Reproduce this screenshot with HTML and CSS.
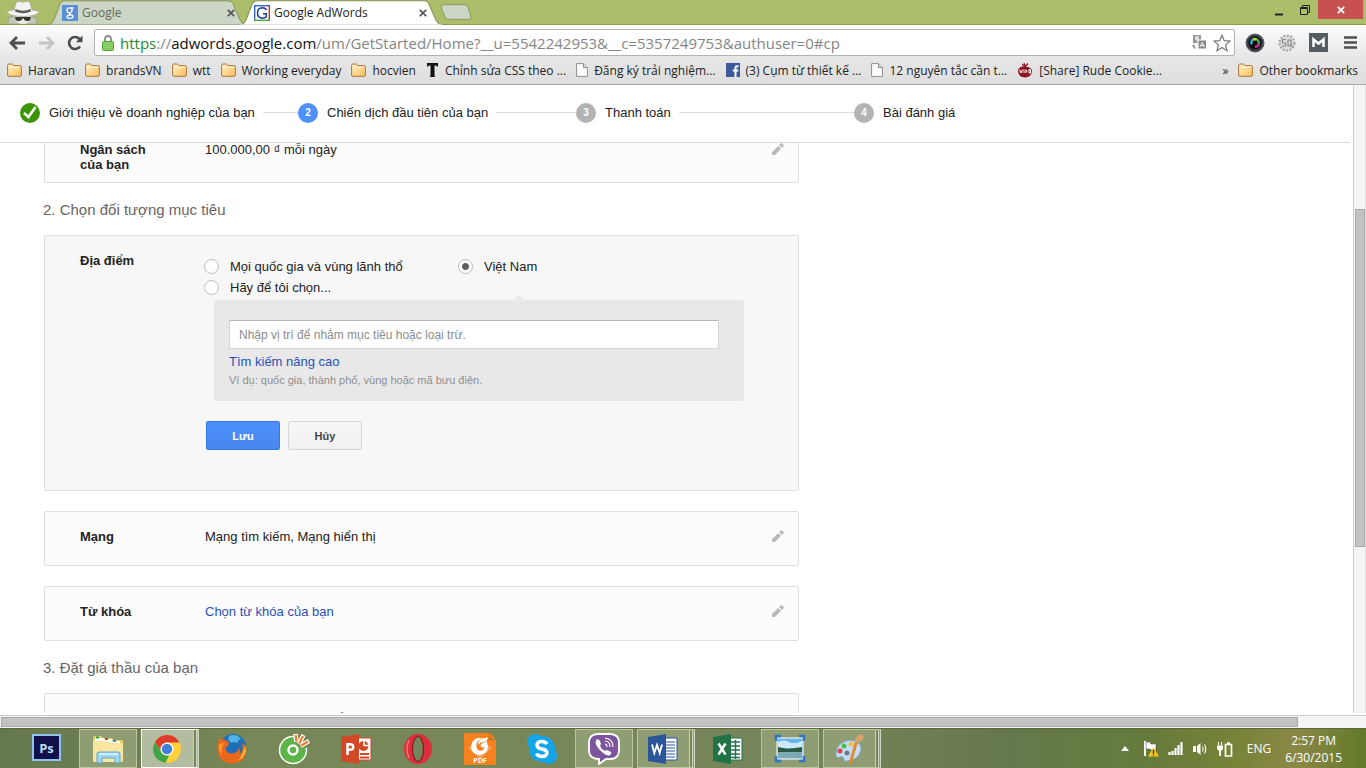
FILE: index.html
```html
<!DOCTYPE html>
<html lang="vi">
<head>
<meta charset="utf-8">
<title>Google AdWords</title>
<link rel="stylesheet" href="styles.css">
</head>
<body>
<svg class="defs" aria-hidden="true">
  <linearGradient id="gold" x1="0" y1="0" x2="1" y2="1"><stop offset="0" stop-color="#fff0c4"/><stop offset="1" stop-color="#fbbd5c"/></linearGradient>
  <symbol id="folder" viewBox="0 0 15 14"><path d="M.6 12V2.5Q.6 1 2 1H5.5L7 2.6H12.8Q14.4 2.6 14.4 4V12Q14.4 13.3 13 13.3H2Q.6 13.3.6 12Z" fill="url(#gold)" stroke="#a8763a"/><path d="M1.5 4.2H13.5" stroke="#fff6dc"/></symbol>
  <symbol id="page" viewBox="0 0 12 14"><path d="M.6.6H7.5L11.4 4.5V13.4H.6Z" fill="#fdfdfd" stroke="#8e8e8e"/><path d="M7.5.6V4.5H11.4" fill="#ddd" stroke="#8e8e8e"/></symbol>
  <symbol id="cross" viewBox="0 0 8 8"><path d="M.8.8 7.2 7.2M7.2.8.8 7.2" stroke="currentColor" stroke-width="1.7"/></symbol>
  <symbol id="pencil" viewBox="0 0 12 12"><path d="M0 9.2V12H2.8L9 5.8 6.2 3ZM7.1 2.1 9.9 4.9 11.6 3.2Q12.2 2.6 11.6 2L10 .4Q9.4-.2 8.8.4Z" fill="#b8b8b8"/></symbol>
</svg>

<header class="tabstrip">
  <svg class="incognito" viewBox="0 0 36 24" aria-hidden="true"><path d="M3 24 5 21 4 18 12 16H26L33 18 32 21 34 24Z" fill="#c4c8ba" stroke="#949a84" stroke-width=".7"/><path d="M11 14V18Q12 24 19 24T27 18V14Z" fill="#e9eae4"/><path d="M3 12.500Q3 10.500 10 10L12 3Q13 .5 16 1.500 19 3 22 1.500 25 .5 26 3L28 10Q35 10.500 35 12.500 31 16.500 19 16.500T3 12.500Z" fill="#f2f3ee" stroke="#a4a996" stroke-width=".8"/><path d="M11.500 9Q19 12.500 26.500 9L27 11.500Q19 15 11 11.500Z" fill="#5b5e56"/><path d="M11 17H27L26.500 19.500Q25.500 21.500 22.500 21 20.500 20.500 19.500 18.500H18.500Q17.500 20.500 15.500 21 12.500 21.500 11.500 19.500Z" fill="#35372f"/></svg>
  <nav class="tabs" aria-label="Tabs">
    <a class="tab tab-idle" href="#google">
      <svg class="tab-shape" viewBox="0 0 200 25" preserveAspectRatio="none" aria-hidden="true"><path d="M0 25Q4 24 6 20L12 4Q13 .8 17 .8H182Q186 .8 187 4L194 20Q196 24 200 25Z" fill="#cbd6c7" stroke="#84935a"/></svg>
      <svg class="fav" viewBox="0 0 16 16" aria-hidden="true"><rect width="16" height="16" fill="#5a8fd8"/><path d="M9.500 3.200Q4.800 2 5 5.500 5.200 8 8.500 7.600 11 6.500 9.500 3.200M8.500 7.600Q6 9 9 9.700 12 11 10.500 12.700 8 14 5.500 12.800 3.800 10.500 8.500 9.800M9 3H11.500" fill="none" stroke="#fff" stroke-width="1.400"/></svg>
      <span>Google</span>
      <svg class="close" aria-hidden="true"><use href="#cross"/></svg>
    </a>
    <a class="tab tab-live" href="#adwords">
      <svg class="tab-shape" viewBox="0 0 200 25" preserveAspectRatio="none" aria-hidden="true"><path d="M0 25Q4 24 6 20L12 4Q13 .8 17 .8H182Q186 .8 187 4L194 20Q196 24 200 25Z" fill="#fff" stroke="#84935a"/><path d="M0 25H200" stroke="#fff"/></svg>
      <svg class="fav" viewBox="0 0 16 16" aria-hidden="true"><rect width="16" height="16" fill="#fff"/><path d="M0 .7H16" stroke="#36c" stroke-width="1.400"/><path d="M.7 0V16" stroke="#36c" stroke-width="1.400"/><path d="M15.300 0V16" stroke="#c33" stroke-width="1.400"/><path d="M0 15.300H16" stroke="#4a4" stroke-width="1.400"/><path d="M12.500 5Q11.500 2.800 8.500 2.800 3.500 3 3.500 8T8.500 13.200Q11 13.200 12.300 11.800V8.700H9" fill="none" stroke="#1c3f96" stroke-width="1.500"/></svg>
      <span>Google AdWords</span>
      <svg class="close" aria-hidden="true"><use href="#cross"/></svg>
    </a>
  </nav>
  <button class="newtab" aria-label="New tab"><svg viewBox="0 0 32 16" aria-hidden="true"><path d="M4 .7H24Q27 .7 28 3L31 13Q31.500 15.300 29 15.300H9Q6 15.300 5 13L1 3Q.5.7 4 .7Z" fill="#cbd6c7" stroke="#8c9a64"/></svg></button>
  <div class="winctl">
    <button aria-label="Minimize"><svg viewBox="0 0 10 12" width="10" height="12"><path d="M1 10.500H9" stroke="#222" stroke-width="2"/></svg></button>
    <button aria-label="Restore"><svg viewBox="0 0 10 12" width="10" height="12"><path d="M.5 3.500H7.500V10.500H.5ZM.5 4.500H7.500M2.500 3V1.500H9.500V8.500H8" fill="none" stroke="#222"/></svg></button>
    <button class="winclose" aria-label="Close"><svg width="8" height="8"><use href="#cross"/></svg></button>
  </div>
</header>

<div class="toolbar">
  <button aria-label="Back"><svg width="17" height="14" viewBox="0 0 17 14"><path d="M8 1 2 7 8 13M2 7H16" fill="none" stroke="#4e4e4e" stroke-width="2.800"/></svg></button>
  <button aria-label="Forward"><svg width="17" height="14" viewBox="0 0 17 14"><path d="M9 1 15 7 9 13M15 7H1" fill="none" stroke="#c4c4c4" stroke-width="2.800"/></svg></button>
  <button aria-label="Reload"><svg width="17" height="16" viewBox="0 0 17 16"><path d="M13 11.500A6 6 0 1 1 12.500 4" fill="none" stroke="#4e4e4e" stroke-width="2.600"/><path d="M15.500.5V7.200H8.800Z" fill="#4e4e4e"/></svg></button>
  <div class="omnibox">
    <svg width="12" height="16" viewBox="0 0 12 16" aria-hidden="true"><path d="M3 8V4Q3 1 6 1T9 4V8" fill="none" stroke="#8b8b8b" stroke-width="1.800"/><rect x=".5" y="6.500" width="11" height="9" rx="1" fill="#8fd468" stroke="#4f9c35"/><path d="M1.500 9H10.500M1.500 11.500H10.500M1.500 13.500H10.500" stroke="#7cc456"/></svg>
    <div class="url" role="textbox" contenteditable="true" spellcheck="false" aria-label="Address"><span class="secure">https</span>://<span class="host">adwords.google.com</span>/um/GetStarted/Home?__u=5542242953&amp;__c=5357249753&amp;authuser=0#cp</div>
    <svg width="15" height="15" viewBox="0 0 15 15" aria-hidden="true"><rect x="1" y="0" width="8" height="8" fill="#999"/><path d="M3 2H7M5 2V6M3 4H7" stroke="#fff"/><rect x="6" y="5" width="8.500" height="9" fill="#888" stroke="#fff"/><path d="M8 12 10.300 7.500 12.500 12M9 10.500H12" fill="none" stroke="#fff"/><path d="M0 11H3M2 9.500V13H4" fill="none" stroke="#888"/></svg>
    <button aria-label="Bookmark this page"><svg width="18" height="18" viewBox="0 0 18 18"><path d="M9 1.200 11.200 6.700 17 7.100 12.600 10.900 14 16.700 9 13.500 4 16.700 5.400 10.900 1 7.100 6.800 6.700Z" fill="#fff" stroke="#777" stroke-width="1.200"/></svg></button>
  </div>
  <div class="extensions">
    <button aria-label="Camera"><svg width="20" height="20" viewBox="0 0 20 20"><circle cx="10" cy="10" r="9" fill="#3b4047" stroke="#5b6068"/><circle cx="10" cy="10" r="6.500" fill="#0a0a10"/><path d="M10 10 7 5.500Q10 4 12.500 5.500Z" fill="#b6d433"/><path d="M10 10 12.500 5.500Q15.500 7.500 15 11Z" fill="#2fb84c"/><path d="M10 10 15 11Q14 15 10 15Z" fill="#d72aa0"/><path d="M10 10 5.500 12Q4.500 8 7 5.500Z" fill="#2ab5c8"/><circle cx="10" cy="10" r="2.500" fill="#07070b"/></svg></button>
    <button aria-label="SEO tool"><svg width="18" height="18" viewBox="0 0 18 18"><circle cx="9" cy="9" r="7.500" fill="#ddd" stroke="#a0a0a0" stroke-width="2" stroke-dasharray="2 1.500"/><path d="M7.800 5.500H4.500V9H7.500V12H4M10 6H13V12H10ZM12 10 14.500 13" fill="none" stroke="#888" stroke-width="1.200"/></svg></button>
    <button aria-label="Mail"><svg width="19" height="19" viewBox="0 0 19 19"><rect width="19" height="19" fill="#565d62"/><path d="M4.500 14V6.500L9.500 10.500 14.500 6.500V14" fill="none" stroke="#fff" stroke-width="2.600"/></svg></button>
    <button class="menu" aria-label="Menu"><svg width="13" height="13" viewBox="0 0 13 13"><path d="M0 1.500H13M0 6.500H13M0 11.500H13" stroke="#505050" stroke-width="2.600"/></svg></button>
  </div>
</div>

<nav class="bookmarks" aria-label="Bookmarks">
  <a href="#b1"><svg class="i-folder"><use href="#folder"/></svg>Haravan</a>
  <a href="#b2"><svg class="i-folder"><use href="#folder"/></svg>brandsVN</a>
  <a href="#b3"><svg class="i-folder"><use href="#folder"/></svg>wtt</a>
  <a href="#b4"><svg class="i-folder"><use href="#folder"/></svg>Working everyday</a>
  <a href="#b5"><svg class="i-folder"><use href="#folder"/></svg>hocvien</a>
  <a href="#b6"><svg width="13" height="16" viewBox="0 0 13 16"><path d="M1 1H12V4.500H11L10 3.500H8.500V14L9.500 15H3.500L4.500 14V3.500H3L2 4.500H1Z" fill="#111"/></svg>Chỉnh sửa CSS theo ...</a>
  <a href="#b7"><svg class="i-page"><use href="#page"/></svg>Đăng ký trải nghiệm...</a>
  <a href="#b8"><svg width="14" height="14" viewBox="0 0 14 14"><rect width="14" height="14" fill="#3e5a9b"/><path d="M12.500 3.200H11Q9.500 3.200 9.500 5V14M6.800 7.500H12.300" fill="none" stroke="#fff" stroke-width="2"/></svg>(3) Cụm từ thiết kế ...</a>
  <a href="#b9"><svg class="i-page"><use href="#page"/></svg>12 nguyên tắc cần t...</a>
  <a href="#b10"><svg width="16" height="15" viewBox="0 0 16 15"><path d="M1 8Q1 3 8 3.500T15 8Q14.500 14.500 8 14.500T1 8Z" fill="#8d1620"/><path d="M5 1.500 8 3.500 11 .5M8 3.500 7 .3" fill="none" stroke="#8d1620" stroke-width="1.400"/><path d="M2.500 6.500 4 10 5.500 6.500M7 6.500V10M9 6.500V10M9 8H10.500M12 6.500H13.500V10H12Z" fill="none" stroke="#fff"/></svg>[Share] Rude Cookie...</a>
  <a class="more" href="#more">»</a>
  <a class="other" href="#other"><svg class="i-folder"><use href="#folder"/></svg>Other bookmarks</a>
</nav>

<div class="viewport">
  <main class="page">
    <ol class="steps">
      <li><svg width="20" height="20" viewBox="0 0 20 20" aria-hidden="true"><circle cx="10" cy="10" r="10" fill="#3b9408"/><path d="M4 10 8.500 14 15.500 4" fill="none" stroke="#fff" stroke-width="2.600"/></svg><span>Giới thiệu về doanh nghiệp của bạn</span></li>
      <li><b class="num num-on">2</b><span>Chiến dịch đầu tiên của bạn</span></li>
      <li><b class="num">3</b><span>Thanh toán</span></li>
      <li><b class="num">4</b><span>Bài đánh giá</span></li>
    </ol>
    <div class="content">
      <section class="card card-budget">
        <h3>Ngân sách của bạn</h3>
        <p>100.000,00 ₫ mỗi ngày</p>
        <button class="edit" aria-label="Chỉnh sửa ngân sách"><svg><use href="#pencil"/></svg></button>
      </section>
      <h2>2. Chọn đối tượng mục tiêu</h2>
      <form class="card card-open">
        <h3>Địa điểm</h3>
        <div class="fields">
          <div class="radios">
            <label><input type="radio" name="loc">Mọi quốc gia và vùng lãnh thổ</label>
            <label><input type="radio" name="loc" checked>Việt Nam</label>
            <label><input type="radio" name="loc">Hãy để tôi chọn...</label>
          </div>
          <div class="picker">
            <input type="text" aria-label="Vị trí" placeholder="Nhập vị trí để nhắm mục tiêu hoặc loại trừ.">
            <a href="#advanced">Tìm kiếm nâng cao</a>
            <small>Ví dụ: quốc gia, thành phố, vùng hoặc mã bưu điện.</small>
          </div>
          <div class="actions">
            <button type="button" class="btn btn-primary">Lưu</button>
            <button type="button" class="btn">Hủy</button>
          </div>
        </div>
      </form>
      <section class="card">
        <h3>Mạng</h3>
        <p>Mạng tìm kiếm, Mạng hiển thị</p>
        <button class="edit" aria-label="Chỉnh sửa mạng"><svg><use href="#pencil"/></svg></button>
      </section>
      <section class="card">
        <h3>Từ khóa</h3>
        <p><a href="#keywords">Chọn từ khóa của bạn</a></p>
        <button class="edit" aria-label="Chỉnh sửa từ khóa"><svg><use href="#pencil"/></svg></button>
      </section>
      <h2>3. Đặt giá thầu của bạn</h2>
      <section class="card">
        <h3>Giá thầu</h3>
        <p>Tự động đặt giá thầu để nhận được nhiều nhấp chuột nhất</p>
      </section>
    </div>
  </main>
  <div class="vbar"><i></i></div>
  <div class="hbar"><i></i></div>
</div>

<footer class="taskbar">
  <div class="apps">
    <button aria-label="Photoshop"><svg viewBox="0 0 32 32"><rect x="3" y="2" width="27" height="25" fill="#12104a" stroke="#8fc4ee" stroke-width="2"/><text x="16.500" y="20" text-anchor="middle" class="ps">Ps</text></svg></button>
    <button class="open" aria-label="File Explorer"><svg viewBox="0 0 32 32"><path d="M1 4Q1 3 2 3H9L11 5H20L22 7H31V28H1Z" fill="#e8c867"/><path d="M3 5H12V9H3ZM12 6H20V10H12ZM20 8H28V13H20Z" fill="#fff"/><path d="M4 4.500H7" stroke="#393" stroke-width="2"/><path d="M13 6H16" stroke="#c44" stroke-width="2"/><path d="M21 8H24" stroke="#38c" stroke-width="2"/><path d="M1 8H17L19 10H31V28Q31 29 30 29H2Q1 29 1 28Z" fill="#f9e7a0"/><path d="M5 30V21Q5 19 7 19H26Q28 19 28 21V30H23V25H10V30Z" fill="#9fd6f2" stroke="#5aa8d6"/><path d="M7 21H26" stroke="#dff3fc" stroke-width="1.500"/></svg></button>
    <button class="open open-live stack" aria-label="Chrome"><svg viewBox="0 0 32 32"><circle cx="16" cy="16" r="14" fill="#ffd23c"/><path d="M3.900 9A14 14 0 0 1 28.500 9.500H16A6.500 6.500 0 0 0 10 18Z" fill="#dd3a2d"/><path d="M3.900 9 10.500 19.500Q13 23 18 22.500L14.500 30A14 14 0 0 1 3.900 9Z" fill="#3fa546"/><circle cx="16" cy="16" r="6.500" fill="#fff"/><circle cx="16" cy="16" r="5.200" fill="#3f80d8"/></svg></button>
    <button aria-label="Firefox"><svg viewBox="0 0 32 32"><circle cx="17" cy="14" r="13" fill="#1f6fb8"/><path d="M13 3Q20 0 25 6 21 7 22 10 19 8 15 10L12 6Z" fill="#4fb4e4"/><path d="M3 5Q5 7 8 6.500L13 9 12 13 9 15Q11 21 17 20.500 22 19.500 22 15 25 18 24 21 28 17 26 10 31 13 30.500 18 29 30 16 30.500 3 30 1.800 18 1.500 11 3 5Z" fill="#e8671b"/><path d="M29 12Q32 22 22 28 28 20 29 12Z" fill="#ffc03b"/><path d="M3 11Q2 17 6 22 5 12 9 10Z" fill="#f69a2c"/></svg></button>
    <button aria-label="Cốc Cốc"><svg viewBox="0 0 32 32"><circle cx="15" cy="17" r="13.500" fill="#5bb549" stroke="#fff" stroke-width="1.500"/><path d="M15 17 17 0H32V14Z" fill="#75855a"/><circle cx="15" cy="17" r="7.500" fill="#5bb549"/><circle cx="15" cy="17" r="4.500" fill="#5bb549" stroke="#fff" stroke-width="2.500"/><path d="M17.500 1 18.500 9M25.500 2 21 11M31 8 22.500 13" stroke="#fff" stroke-width="4.500"/><path d="M17.700 2 18.500 8.500M25 3 21.200 10.500M30 8.600 23 12.700" stroke="#ef7d2f" stroke-width="2.300"/></svg></button>
    <button aria-label="PowerPoint"><svg viewBox="0 0 32 32"><path d="M17 5H31V27H17Z" fill="#fff" stroke="#d24726"/><path d="M20 21H29M20 24.500H29" stroke="#d24726" stroke-width="1.800"/><circle cx="23.500" cy="13" r="5" fill="#d24726"/><path d="M24 13V7.500M24 12.500H29" stroke="#fff" stroke-width="1.500"/><path d="M1 4 19 1V31L1 28Z" fill="#d24726"/><path d="M7.500 22V11.200H10Q13.300 11.200 13.300 14T10 16.800H7.500" fill="none" stroke="#fff" stroke-width="2.500"/></svg></button>
    <button aria-label="Opera"><svg viewBox="0 0 32 32"><ellipse cx="16" cy="16" rx="14" ry="15" fill="#dc2f3a"/><ellipse cx="16" cy="16" rx="5.500" ry="12.500" fill="#75855c" stroke="#8c1720" stroke-width="1.200"/><path d="M7 7Q3 16 7 25" fill="none" stroke="#f0747b" stroke-width="1.500"/></svg></button>
    <button aria-label="PDF"><svg viewBox="0 0 32 32"><path d="M0 0H25V7H32V32H0Z" fill="#f5821f"/><path d="M26 0 32 6H26Z" fill="#f5821f"/><path d="M16 6 28 15 16 26 4 15Z" fill="#f8a35a"/><circle cx="15.500" cy="13.500" r="8.500" fill="#fff"/><path d="M23 5Q11 6 12.500 14 13.500 18.500 18 17.500 20.500 16.500 20 13.500 18 15.500 16.500 13 17 9 25 8Z" fill="#f5821f"/><path d="M24 4.500Q13 5.500 14 12 16 8.500 22.500 8.500Z" fill="#fff"/><text x="16" y="30" text-anchor="middle" class="pdf">PDF</text></svg></button>
    <button aria-label="Skype"><svg viewBox="0 0 32 32"><circle cx="16" cy="16" r="13" fill="#12a5e8"/><circle cx="9" cy="9" r="8" fill="#12a5e8"/><circle cx="23" cy="23" r="8" fill="#12a5e8"/><path d="M21 11Q19 8 15 8.500 11 9 11 12 11 15 16 16 21 17 21 20 20.500 23.500 16 23.500 12 23.500 10.500 20.500" fill="none" stroke="#fff" stroke-width="3.500"/></svg></button>
    <button class="open" aria-label="Viber"><svg viewBox="0 0 32 32"><path d="M10 1H22Q31 1 31 10V17Q31 26 22 26H18L11 31V26Q1 26 1 17V10Q1 1 10 1Z" fill="#7d559c" stroke="#fff" stroke-width="1.800"/><path d="M8 7Q10 5 12 8L13 11Q11 13 14 16T19 17L23 19Q24 20 22 22 20 24 14 19 6 12 8 7Z" fill="#fff"/><path d="M17 5Q25 6 25 14M17 8Q22 8 22 14M17 11Q19 11 19 14" fill="none" stroke="#fff" stroke-width="1.200"/></svg></button>
    <button class="open stack" aria-label="Word"><svg viewBox="0 0 32 32"><path d="M17 5H30V27H17Z" fill="#fff" stroke="#2b579a"/><path d="M19 9H28M19 12H28M19 15H28M19 18H28M19 21H28M19 24H28" stroke="#2b579a" stroke-width="1.200"/><path d="M1 4 19 1V31L1 28Z" fill="#2b579a"/><path d="M5 11.500 7.300 20 10 12 12.700 20 15 11.500" fill="none" stroke="#fff" stroke-width="1.900"/></svg></button>
    <button aria-label="Excel"><svg viewBox="0 0 32 32"><path d="M17 5H30V27H17Z" fill="#fff" stroke="#217346"/><path d="M19 9H28M19 13H28M19 17H28M19 21H28M19 24.500H28M23.500 7V26" stroke="#217346" stroke-width="1.400"/><path d="M1 4 19 1V31L1 28Z" fill="#217346"/><path d="M6.500 10.500 13.500 21.500M13.500 10.500 6.500 21.500" fill="none" stroke="#fff" stroke-width="2.400"/></svg></button>
    <button class="open" aria-label="Image viewer"><svg viewBox="0 0 32 32"><rect x="3" y="5" width="26" height="21" fill="#69b4e8" stroke="#fff"/><path d="M4 9Q10 6 15 9T28 8V15H4Z" fill="#cfe9fa"/><path d="M4 14Q9 15 14 16L28 14V19H4Z" fill="#2c5a45"/><path d="M4 19H28V25H4Z" fill="#7fa9b5"/><path d="M2 8V3H7M25 3H30V8M30 23V28H25M7 28H2V23" fill="none" stroke="#3377c4" stroke-width="2.500"/></svg></button>
    <button class="open stack" aria-label="Paint"><svg viewBox="0 0 32 32"><path d="M3 20Q4 9 17 7 29 8 28 17 26 27 14 28 10 29 11 25 9 22 5 25 2 24 3 20Z" fill="#c5def0" stroke="#7ca4c4"/><circle cx="7" cy="18" r="2.500" fill="#d44"/><circle cx="11" cy="13" r="2.500" fill="#5b5"/><circle cx="18" cy="11" r="2.500" fill="#eb5"/><circle cx="14" cy="20" r="2.500" fill="#687b8e"/><path d="M17 31 24 7" stroke="#e08a35" stroke-width="3"/><path d="M22 9Q21 3 29 1L31 4Q30 8 26 9Z" fill="#d7a36c"/></svg></button>
  </div>
  <div class="tray">
    <button aria-label="Show hidden icons"><svg width="8" height="5" viewBox="0 0 8 5"><path d="M0 5 4 0 8 5Z" fill="#fff"/></svg></button>
    <button aria-label="Action Center"><svg width="16" height="17" viewBox="0 0 16 17"><path d="M2 1V16" stroke="#fff" stroke-width="2"/><path d="M3 2H7L8 4H13V10H8L7 9H3Z" fill="#fff" stroke="#444" stroke-width=".5"/><path d="M10.500 7 16 16.500H5Z" fill="#f5c518"/><path d="M10.500 10V13.500M10.500 14.500V15.500" stroke="#222" stroke-width="1.300"/></svg></button>
    <button aria-label="Network"><svg width="16" height="13" viewBox="0 0 16 13"><path d="M1.500 10V13M4.500 9V13M7.500 6V13M10.500 3V13M13.500 0V13" stroke="#fff" stroke-width="2.200"/></svg></button>
    <button aria-label="Volume"><svg width="15" height="14" viewBox="0 0 15 14"><path d="M0 4H3V10H0ZM4 4 7.500 1V13L4 10Z" fill="#fff"/><path d="M9.500 4.500Q11 7 9.500 9.500M11.500 2.500Q14 7 11.500 11.500" fill="none" stroke="#fff" stroke-width="1.100"/></svg></button>
    <button aria-label="Battery"><svg width="16" height="16" viewBox="0 0 16 16"><path d="M1.500 1V4M4.500 1V4" stroke="#fff" stroke-width="1.200"/><path d="M0 4.500H6V8L4 10V15H2.200V10L0 8Z" fill="#fff"/><path d="M8.500 3.500H14.500V15H8.500ZM10 2H13" fill="none" stroke="#fff" stroke-width="1.700"/></svg></button>
    <span class="lang">ENG</span>
    <time class="clock"><span>2:57 PM</span><span>6/30/2015</span></time>
  </div>
</footer>
</body>
</html>
```
FILE: styles.css
```css
* { box-sizing: border-box; }

body {
  margin: 0;
  height: 100vh;
  display: flex;
  flex-direction: column;
  overflow: hidden;
  background: #fff;
  color: #222;
  font: 13px/15px "Liberation Sans", Arial, sans-serif;
}

a { color: #2a50b8; text-decoration: none; }
button { padding: 0; border: 0; background: none; display: grid; place-items: center; }
svg { flex: none; display: block; }
h2, h3, p, ol { margin: 0; padding: 0; }
.defs { position: absolute; width: 0; height: 0; }

/* Browser chrome */
.tabstrip, .toolbar, .bookmarks, .taskbar {
  flex: none;
  font-family: "Open Sans", "Noto Sans", sans-serif;
}

.tabstrip {
  display: flex;
  height: 25px;
  padding-left: 4px;
  background: #abbd69;
  border-bottom: 1px solid #8a9a55;
}
.incognito { width: 36px; height: 24px; }
.tabs { display: flex; margin-left: 8px; }
.tab {
  position: relative;
  display: flex;
  align-items: center;
  gap: 4px;
  width: 198px;
  height: 25px;
  padding: 0 11px 0 14px;
  color: #333;
  font-size: 12px;
}
.tab-live { margin-left: -6px; width: 202px; z-index: 1; padding-right: 15px; color: #222; }
.tab-idle { color: #666b5c; }
.tab > * { position: relative; }
.tab > .tab-shape { position: absolute; inset: 0; width: 100%; height: 100%; }
.fav { width: 16px; height: 16px; }
.close { width: 8px; height: 8px; margin-left: auto; color: #555; }
.newtab { align-self: center; width: 32px; height: 16px; margin-left: -2px; }
.newtab svg { width: 32px; height: 16px; }
.winctl { display: flex; align-items: flex-start; margin-left: auto; padding-right: 3px; }
.winctl button { width: 26px; height: 19px; }
.winctl .winclose { width: 45px; background: #c75050; color: #fff; }

.toolbar {
  display: flex;
  align-items: center;
  gap: 12px;
  height: 33px;
  padding: 2px 9px 0;
  background: linear-gradient(#fdfdfd, #e6e6e6);
}
.omnibox {
  flex: 1;
  display: flex;
  align-items: center;
  gap: 6px;
  min-width: 0;
  height: 27px;
  margin-left: -2px;
  padding: 0 3px 0 7px;
  background: #fff;
  border: 1px solid #b2b2b2;
  border-radius: 2px;
}
.url { flex: 1; min-width: 0; overflow: hidden; white-space: nowrap; font-size: 15px; line-height: 24px; color: #858585; }
.secure { color: #1e8a2c; }
.host { color: #111; }
.extensions { display: flex; align-items: center; gap: 13px; margin-left: -2px; }
.menu { margin-left: 3px; }

.bookmarks {
  display: flex;
  align-items: center;
  gap: 10px;
  height: 27px;
  padding: 0 8px 2px 7px;
  background: linear-gradient(#e6e6e6, #dedede);
  border-bottom: 1px solid #a8a8a8;
  font-size: 12px;
}
.bookmarks a { display: flex; align-items: center; gap: 6px; color: #222; white-space: nowrap; }
.bookmarks .more { margin-left: auto; }
.i-folder { width: 15px; height: 14px; }
.i-page { width: 12px; height: 14px; }

/* Scrolling page area */
.viewport {
  flex: 1;
  min-height: 0;
  display: grid;
  grid-template-columns: minmax(0, 1fr) 13px;
  grid-template-rows: minmax(0, 1fr) 15px;
}
.page { display: flex; flex-direction: column; min-height: 0; }
.vbar { padding: 124px 0 0 1px; background: #f4f4f4; border-left: 1px solid #ccc; border-right: 1px solid #e0e0e0; }
.vbar i { display: block; height: 67%; background: #c2c2c2; border: 1px solid #aaa; }
.hbar { grid-column: 1 / -1; margin-top: 2px; padding: 1px 0 1px 1px; background: #f4f4f4; border-top: 1px solid #ccc; }
.hbar i { display: block; width: 95%; height: 100%; background: #c2c2c2; border: 1px solid #aaa; }

.steps {
  flex: none;
  display: flex;
  align-items: center;
  height: 58px;
  margin-right: 3px;
  padding: 0 0 2px 20px;
  border-bottom: 1px solid #dcdcdc;
  list-style: none;
}
.steps li { display: flex; align-items: center; width: 278px; }
.steps span { margin-left: 9px; }
.steps li:not(:last-child)::after { content: ""; flex: 1; height: 1px; margin-left: 8px; background: #dcdcdc; }
.num {
  width: 20px;
  border-radius: 50%;
  background: #b3b3b3;
  color: #fff;
  font-size: 10px;
  line-height: 20px;
  text-align: center;
}
.num-on { background: #4d90fe; }

.content { flex: 1; min-height: 0; overflow: hidden; padding-left: 44px; }
.content h2 { margin-left: -1px; padding-top: 2px; color: #666; font-size: 15px; font-weight: 400; line-height: 50px; }
.card {
  display: grid;
  grid-template-columns: 80px minmax(0, 1fr) 12px;
  column-gap: 45px;
  align-items: start;
  max-width: 755px;
  padding: 17px 14px 21px 35px;
  background: #fcfcfc;
  border: 1px solid #dedede;
  border-radius: 2px;
}
.card + .card { margin-top: 20px; }
.card h3 { font-size: 13px; font-weight: 700; }
.card-budget { margin-top: -19px; padding-bottom: 10px; }
.edit { margin-top: 1px; }
.edit svg { width: 12px; height: 12px; }

.card-open { padding: 17px 54px 40px 35px; grid-template-columns: 80px minmax(0, 1fr); background: #f7f7f7; }
.fields { padding-top: 3px; }
.radios { display: grid; grid-template-columns: 254px 1fr; margin-left: -1px; }
.radios label { display: flex; align-items: center; gap: 11px; line-height: 21px; }
.radios input {
  appearance: none;
  width: 15px;
  height: 15px;
  margin: 0;
  border: 1px solid #bdbdbd;
  border-radius: 50%;
  background: #fff;
}
.radios input:checked { background: radial-gradient(circle, #606060 3px, #fff 4px); }
.picker {
  position: relative;
  display: flex;
  flex-direction: column;
  margin: 2px 0 0 9px;
  padding: 20px 25px 13px 15px;
  background: #e8e8e8;
  border-radius: 3px;
}
.picker::before {
  content: "";
  position: absolute;
  top: -5px;
  left: 300px;
  border: 5px solid transparent;
  border-top: 0;
  border-bottom-color: #e8e8e8;
}
.picker input {
  height: 29px;
  padding: 0 9px;
  border: 1px solid #d4d4d4;
  border-top-color: #b9b9b9;
  background: #fff;
  font: 12px "Liberation Sans", Arial, sans-serif;
}
.picker input::placeholder { color: #8c8c8c; opacity: 1; }
.picker a { align-self: start; margin-top: 5px; }
.picker small { margin-top: 4px; color: #8f8f8f; font-size: 11px; }
.actions { display: flex; gap: 8px; margin: 20px 0 0 1px; }
.btn {
  width: 74px;
  height: 29px;
  border: 1px solid #d6d6d6;
  border-radius: 2px;
  background: linear-gradient(#f7f7f7, #f1f1f1);
  color: #444;
  font: 700 11px "Liberation Sans", Arial, sans-serif;
}
.btn-primary { border-color: #3079ed; background: linear-gradient(#4d90fe, #4787ed); color: #fff; }

/* Taskbar */
.taskbar {
  display: flex;
  justify-content: space-between;
  height: 40px;
  padding-left: 17px;
  color: #fff;
  font-size: 12px;
  background: linear-gradient(90deg, #66784f, #778858 20%, #75855a 60%, #65784b 74%, #657b3c 84%, #768238 90%, #8a8845 95%, #62792b);
  border-top: 1px solid #59693c;
}
.apps { display: flex; gap: 4px; }
.apps button { width: 58px; height: 39px; }
.apps svg { width: 32px; height: 32px; }
.apps .open { background: #8f9d72; border: 1px solid #b9c4a1; }
.apps .open-live { background: #b2bca0; border-color: #fff; }
.apps .stack { border-right: 3px double #d0d7c0; box-shadow: inset -2px 0 0 #75855a, inset -3px 0 0 #c8d0b6; padding-right: 4px; }
.ps { font: 700 13px "Open Sans", sans-serif; fill: #b5dcfa; }
.pdf { font: 700 7px "Open Sans", sans-serif; fill: #fff; }
.tray { display: flex; align-items: center; gap: 9px; padding-right: 24px; }
.tray button:first-child { margin-right: 5px; }
.lang { margin-left: 5px; }
.clock { display: flex; flex-direction: column; margin-left: 5px; line-height: 17px; text-align: center; }
```
